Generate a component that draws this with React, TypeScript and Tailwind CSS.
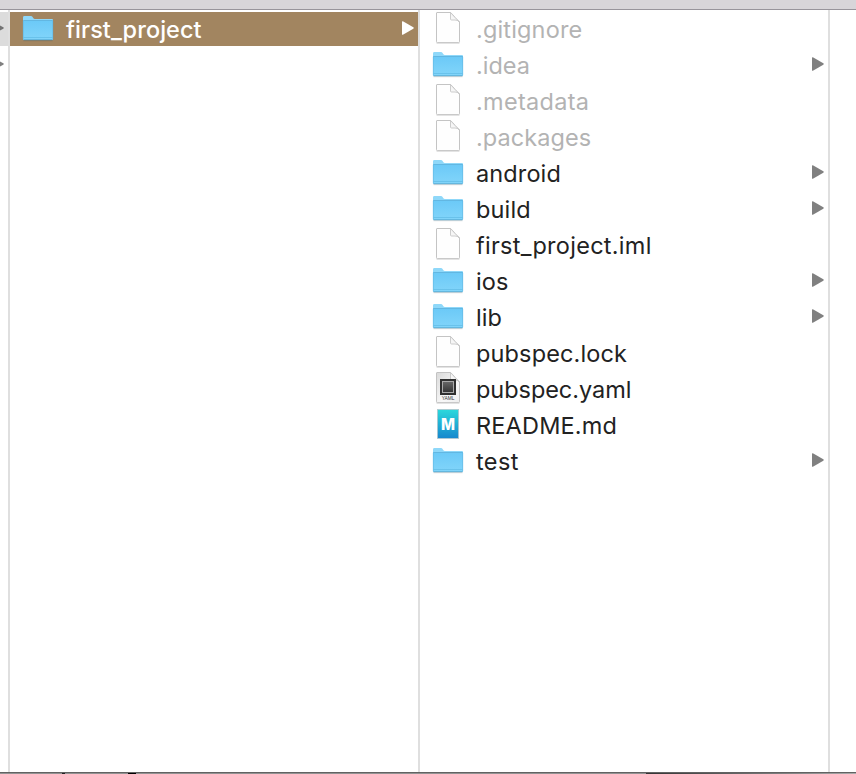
type Kind = "folder" | "file" | "yaml" | "md";
type Entry = { name: string; kind: Kind; dim?: boolean; tracking: string };

const entries: Entry[] = [
  { name: ".gitignore", kind: "file", dim: true, tracking: "tracking-[0.16px]" },
  { name: ".idea", kind: "folder", dim: true, tracking: "tracking-[0px]" },
  { name: ".metadata", kind: "file", dim: true, tracking: "tracking-[0.3px]" },
  { name: ".packages", kind: "file", dim: true, tracking: "tracking-[0.06px]" },
  { name: "android", kind: "folder", tracking: "tracking-[0.12px]" },
  { name: "build", kind: "folder", tracking: "tracking-[0.15px]" },
  { name: "first_project.iml", kind: "file", tracking: "tracking-[0.27px]" },
  { name: "ios", kind: "folder", tracking: "tracking-[0.1px]" },
  { name: "lib", kind: "folder", tracking: "tracking-[0.1px]" },
  { name: "pubspec.lock", kind: "file", tracking: "tracking-[0.14px]" },
  { name: "pubspec.yaml", kind: "yaml", tracking: "tracking-[-0.05px]" },
  { name: "README.md", kind: "md", tracking: "tracking-[0.18px]" },
  { name: "test", kind: "folder", tracking: "tracking-[0.4px]" },
];

function FolderIcon() {
  return (
    <svg width="32" height="34" viewBox="0 0 32 34" className="shrink-0">
      <defs>
        <linearGradient id="folder" x1="0" y1="0" x2="0" y2="1">
          <stop offset="0" stopColor="#6bc9f7" />
          <stop offset="1" stopColor="#82d5fa" />
        </linearGradient>
      </defs>
      <g transform="translate(0 .8)">
        <path d="M1.500 28.900h29" stroke="#000" strokeOpacity=".16" strokeWidth="1" />
        <path d="M1 27V5.600Q1 4.200 2.400 4.200H9q.9 0 1.400.8l1 1.500q.5.700 1.400.700H30q1 0 1 1V27q0 1.300-1.200 1.300H2.200Q1 28.300 1 27Z" fill="#8fd8f9" />
        <path d="M1 8.500h30V27q0 1.300-1.200 1.300H2.200Q1 28.300 1 27Z" fill="url(#folder)" />
        <path d="M1.300 8.700h29.400" stroke="#62b7e2" strokeWidth="1" />
        <path d="M1.500 25.700h29" stroke="#67bfe9" strokeWidth=".9" />
        <path d="M1.300 9V27.500M30.700 27.500V9" fill="none" stroke="#5fb6df" strokeWidth=".6" />
        <path d="M1.500 28h29" stroke="#4f9fc8" strokeWidth=".8" />
      </g>
    </svg>
  );
}

function PageIcon({ yaml = false }: { yaml?: boolean }) {
  return (
    <svg width="32" height="34" viewBox="0 0 32 34" className="shrink-0">
      <defs>
        <linearGradient id="yaml" x1="0" y1="0" x2="1" y2="1">
          <stop offset="0" stopColor="#d9d9d9" />
          <stop offset=".6" stopColor="#f8f8f8" />
          <stop offset="1" stopColor="#eee" />
        </linearGradient>
        <linearGradient id="chip" x1="0" y1="0" x2="0" y2="1">
          <stop offset="0" stopColor="#686868" />
          <stop offset="1" stopColor="#333" />
        </linearGradient>
      </defs>
      <path d="M4.500 32.200h23" stroke="#000" strokeOpacity=".14" />
      <path d="M5 1.500H18.500Q21 3.500 23 6.500L27.500 11V30.700q0 .9-.9.900H5.400q-.9 0-.9-.9V2q0-.5.500-.5Z" fill={yaml ? "url(#yaml)" : "#fefefe"} stroke="#bdbdbd" strokeWidth=".9" />
      <path d="M18.500 1.500V8q0 1 1 1H23Q26 9 27.500 11L23 6.500Z" fill="#f6f6f6" stroke="#c2c2c2" strokeWidth=".8" strokeLinejoin="round" />
      {yaml && (
        <>
          <rect x="8" y="8" width="16" height="16" fill="#303030" />
          <rect x="10.500" y="10.500" width="11" height="11" fill="url(#chip)" stroke="#aaa" strokeWidth="1" />
          <text x="16" y="29.300" textAnchor="middle" fontFamily="Liberation Sans, sans-serif" fontSize="4.800" fill="#333">YAML</text>
        </>
      )}
    </svg>
  );
}

function MarkdownIcon() {
  return (
    <svg width="32" height="34" viewBox="0 0 32 34" className="shrink-0">
      <defs>
        <linearGradient id="markdown" x1="0" y1="0" x2="0" y2="1">
          <stop offset="0" stopColor="#2bd9dc" />
          <stop offset="1" stopColor="#1787cd" />
        </linearGradient>
      </defs>
      <rect x="5.400" y="2.400" width="21.200" height="29" fill="url(#markdown)" stroke="#b5c6ce" strokeWidth=".8" />
      <text x="16" y="23" textAnchor="middle" fontFamily="Inter, sans-serif" fontWeight="800" fontSize="16" textLength="14" lengthAdjust="spacingAndGlyphs" fill="#fff">M</text>
    </svg>
  );
}

function Icon({ kind }: { kind: Kind }) {
  if (kind === "folder") return <FolderIcon />;
  if (kind === "md") return <MarkdownIcon />;
  return <PageIcon yaml={kind === "yaml"} />;
}

function Arrow({ className }: { className: string }) {
  return (
    <svg width="12" height="14" viewBox="0 0 12 14" className={`shrink-0 ${className}`}>
      <path d="M0 .800Q0 0 .900.300L11.300 6.300q.9.700 0 1.400L.900 13.700Q0 14 0 13.200Z" fill="currentColor" />
    </svg>
  );
}

export default function App() {
  return (
    <div className="flex h-[774px] w-[856px] flex-col overflow-hidden bg-white font-['Inter','Liberation_Sans',sans-serif] text-[23.5px] leading-[34px] text-[#222222]">
      <div className="h-[10px] shrink-0 border-b border-[#98949b] bg-[#d8d5d9]" />
      <div className="flex min-h-0 flex-1">
        <div className="w-[10px] shrink-0 overflow-hidden border-r-2 border-[#dfdfdf] pt-[2px]">
          <div className="flex h-[34px] items-center bg-[#dcdcdc]">
            <Arrow className="-ml-2 mb-[2px] text-[#737373]" />
          </div>
          <div className="mt-[2px] flex h-[34px] items-center">
            <Arrow className="-ml-2 mb-[2px] text-[#808080]" />
          </div>
        </div>
        <div className="w-[410px] shrink-0 border-r-2 border-[#dfdfdf] pt-[2px]">
          <div className="flex h-[34px] items-center bg-[#a28560] pr-[4px] pl-[12px] text-white">
            <div className="mb-[2px]">
              <FolderIcon />
            </div>
            <span className="ml-[12px] flex-1 pt-[2px] font-medium tracking-[0.05px]">first_project</span>
            <Arrow className="mb-[2px] text-white" />
          </div>
        </div>
        <div className="flex w-[410px] shrink-0 flex-col gap-[2px] border-r-2 border-[#dfdfdf] pt-[1px] pr-[4px] pl-[12px]">
          {entries.map((e) => (
            <div key={e.name} className="flex h-[34px] items-center">
              <Icon kind={e.kind} />
              <span className={`ml-[12px] flex-1 pt-[4px] whitespace-nowrap ${e.tracking} ${e.dim ? "text-[#b3b3b3]" : ""}`}>{e.name}</span>
              {e.kind === "folder" && <Arrow className="text-[#808080]" />}
            </div>
          ))}
        </div>
      </div>
      <div className="flex h-[2px] shrink-0 border-t border-[#626262] bg-[#929292]">
        <div className="ml-[62px] h-px w-[3px] bg-[#222]" />
        <div className="ml-[63px] h-px w-[8px] bg-black" />
        <div className="ml-[510px] h-px flex-1 bg-linear-to-r from-[#333] to-[#aaa]" />
      </div>
    </div>
  );
}
